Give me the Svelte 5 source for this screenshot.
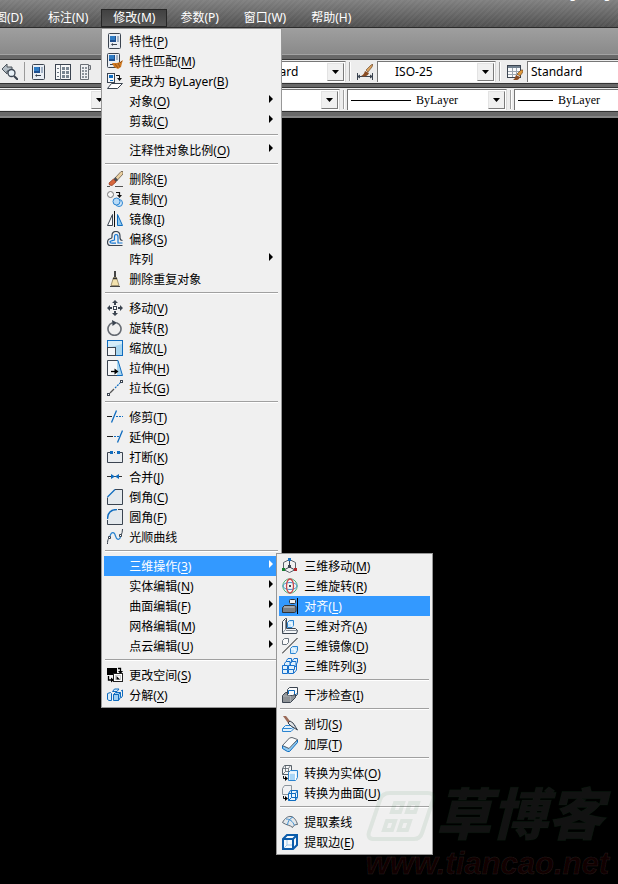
<script>
    // 16x16 图标
    const dark = '#3b4450';
    const blue = '#0f6cbf';

    const icons = {
        props: `<rect x="1.5" y=".5" width="12" height="15" rx="1" fill="#e9eef4" stroke="${dark}"/><path d="M3 3h6v6H3z" fill="#1d4f8f"/><path d="M3 3h5v4H3z" fill="#2f7cc4"/><path d="M10 3h2v6h-2z" fill="#a3b3c6"/><path d="M5 11.500h5" stroke="${dark}"/><path d="M4 11.500l2-1.500v3z" fill="${dark}"/>`,
        match: `<rect x=".5" y=".5" width="12" height="14" rx="1" fill="#e9eef4" stroke="${dark}"/><path d="M2 2h6v6H2z" fill="#1d4f8f"/><path d="M2 2h5v4H2z" fill="#2f7cc4"/><path d="M9 2h2v5H9z" fill="#a3b3c6"/><path d="M3 11.500h3" stroke="${dark}"/><path d="M16 7l-3 2-3 1H5l2 4 4 2 3-2 1-4z" fill="#d07a22"/><path d="M8 11l3 4M11 10l2 4M15 8l-2 2" stroke="#7c4212" stroke-width=".7" fill="none"/>`,
        bylayer: `<rect x=".5" y=".5" width="7" height="9" fill="#f4f8fc" stroke="${dark}"/><path d="M2 2h4v3H2z" fill="${blue}"/><path d="M3 7.500h3" stroke="${blue}"/><path d="M9 2.500h3.500v3" fill="none" stroke="#111"/><path d="M10 5h5l-2.500 3z" fill="#111"/><path d="M4.500 10.500h11l-5 5H.5z" fill="#fff" stroke="${dark}"/>`,
        erase: `<path d="M0 15.500h3M8 15.500h8" stroke="#555"/><path d="M8 7l6-6.500h2V3l-6 6.500z" fill="#e9cfa0" stroke="#6a5a48" stroke-width=".8"/><path d="M6.500 8L8.500 6l2.500 3-2 2z" fill="#4a4d52"/><path d="M6.500 8L9 11l-4 3.500-2.500-.5-.500-2z" fill="#d8683e" stroke="#8a2e12" stroke-width=".7"/>`,
        copy: `<circle cx="3.500" cy="3.500" r="3" fill="#f7f7f7" stroke="#777"/><path d="M9 1.500h3.500v3" fill="none" stroke="#111" stroke-width="1.200"/><path d="M10 4h5l-2.500 3z" fill="#111"/><circle cx="12" cy="12" r="3.500" fill="#d3e8fa" stroke="#2b84d0"/><circle cx="9.500" cy="10.500" r="3.500" fill="#b9dbf7" stroke="#2b84d0"/>`,
        mirror: `<path d="M5.500 3.500v11h-5z" fill="#fafafa" stroke="${dark}"/><path d="M7.500 0v16" stroke="#111"/><path d="M10.500 3.500v11h5z" fill="#8fc8ee" stroke="${blue}"/>`,
        offset: `<path d="M15.500 9.500c-2 0-2.500-1-2.500-3V5c0-3-1.500-4.500-4-4.500S5 2 5 4.500V6c0 1-.5 1.500-1.500 1.500C1.500 8 .5 9 .5 11s1 3.500 3 3.500h12" fill="none" stroke="${dark}" stroke-width="1.200"/><path d="M15.500 12H11V6c0-2-.7-2.500-2-2.500S7.500 4.500 7.500 6v3c-2 .5-4.500.5-4.500 2 0 1 1 1.200 2 1.200h4" fill="none" stroke="#1477d4" stroke-width="1.200"/>`,
        overkill: `<path d="M8 0v6" stroke="#444" stroke-width="2"/><path d="M6.500 6.500h3l2.500 8H4z" fill="#f3e2ae" stroke="#8a7c58" stroke-width=".8"/><path d="M6 7.500h4" stroke="#333" stroke-width="1.500"/><path d="M3 15.500h10" stroke="#444"/>`,
        move: `<rect x="6.500" y="6.500" width="3" height="3" fill="#fff" stroke="${dark}"/><path d="M8 0l3 3H9v2H7V3H5zM8 16l3-3H9v-2H7v2H5zM0 8l3-3v2h2v2H3v2zM16 8l-3-3v2h-2v2h2v2z" fill="${dark}"/>`,
        rotate: `<path d="M9.500 2.700a6.500 6.500 0 1 1-4 0" fill="none" stroke="#666b72" stroke-width="1.600"/><path d="M5 0l5 2.700L5.500 6z" fill="${dark}"/>`,
        scale: `<rect x=".5" y=".5" width="15" height="15" fill="#a8d5ef" stroke="${blue}"/><path d="M1 1h14v3L4 7H1z" fill="#d4ecf8"/><rect x=".5" y="7.500" width="8" height="8" fill="#f4f6f8" stroke="${dark}"/>`,
        stretch: `<path d="M9 .5h2l4.500 15H9z" fill="#a8d5ef" stroke="${blue}"/><path d="M10 .5H.5v15H10" fill="#f6f7f8" stroke="${dark}"/><path d="M4 11.500h4" stroke="#000" stroke-width="1.300"/><path d="M7.500 8.500l4 3-4 3z"/>`,
        lengthen: `<path d="M3 13l4-4" stroke="#555" stroke-width="1.200"/><path d="M8 8l5-5" stroke="${blue}" stroke-width="1.200" stroke-dasharray="2 1"/><rect x=".5" y="13.500" width="2" height="2" fill="#fff" stroke="${dark}"/><rect x="13.500" y=".5" width="2" height="2" fill="#fff" stroke="${dark}"/>`,
        trim: `<path d="M0 7.500h5" stroke="#222"/><path d="M4.500 13.500l5-12" stroke="${blue}" stroke-width="1.300"/><path d="M9 7.500h7" stroke="${blue}" stroke-dasharray="2 1"/>`,
        extend: `<path d="M0 7.500h6" stroke="#222"/><path d="M7 7.500h5" stroke="${blue}" stroke-dasharray="2 1"/><path d="M10.500 13.500l5-12" stroke="${blue}" stroke-width="1.300"/>`,
        break: `<path d="M1 4h14v10H1z" fill="#e9ecef"/><path d="M3 3.500H.5v10h15v-10H13M7 3.500h1" fill="none" stroke="${dark}"/><path d="M3 2h3v3H3zM10 2h3v3h-3z" fill="${blue}"/>`,
        join: `<path d="M0 7.500h15" stroke="#333"/><path d="M4 5l4 2.500L4 10zM12 5L8 7.500l4 2.500z" fill="${blue}"/>`,
        chamfer: `<path d="M7 .5h8.500v15H.5V8z" fill="#e4e9ed"/><path d="M8 .5h7.500v15H.5V8.500" fill="none" stroke="${dark}"/><path d="M.5 8L8 .5" stroke="${blue}" stroke-width="1.300"/>`,
        fillet: `<path d="M10 .5h5.500v15H.5V10C1 4 4 1 10 .5z" fill="#e4e9ed"/><path d="M11 .5h4.500v15H.5V11" fill="none" stroke="${dark}"/><path d="M.5 10C.5 4 4 .5 10 .5" fill="none" stroke="${blue}" stroke-width="1.300"/>`,
        blend: `<path d="M.5 15c0-2 0-4 1.500-6M14 6.500c1-2 1.500-4 1.500-6.500" fill="none" stroke="${dark}"/><path d="M3 7c1.500-5 4.500-4 5.500 0s4 4.500 5 1" fill="none" stroke="#2b84d0" stroke-width="1.200"/><path d="M1.500 7.500h2v2h-2zM12.500 5.500h2v2h-2z" fill="#fff" stroke="${dark}"/>`,
        space: `<path d="M0 1h10v7H0z"/><path d="M11 1.500h2.500V5M1.500 9v4H4" fill="none" stroke="#000" stroke-width="1.300"/><path d="M11 4h5l-2.500 3zM4 10.500l3 2.500-3 2.500z"/><rect x="6.500" y="6.500" width="9" height="8" fill="#fff" stroke="#222"/><path d="M8.500 8.500h5v4h-5z" fill="none" stroke="#999" stroke-dasharray="1 1"/><path d="M9.500 9l3.500 3.500h-3.500z"/>`,
        explode: `<path d="M6.500 7.500l2-2h5v5l-2 3h-5z" fill="#9fd0f2" stroke="${blue}"/><path d="M6.500 7.500h5v6M11.500 7.500l2-2" fill="none" stroke="${blue}"/><path d="M5.500 4.500l2-2.500H12l-2 2.500z" fill="#d7ecfa" stroke="${blue}"/><path d="M.5 6.500l3-1 1 1v7H2l-1.500-1z" fill="#d7ecfa" stroke="${blue}"/><path d="M14 4l1.500-1v6L14 11" fill="none" stroke="${blue}"/>`,
        move3d: `<path d="M7.500 1.500l6 3v7l-6 3-6-3v-7z" fill="none" stroke="#59626a"/><path d="M7.500 2v7M7.500 9L2 12M7.500 9l5.500 3" stroke="${dark}" fill="none"/><path d="M6 0h3v3H6z" fill="#1b74c4"/><path d="M0 10h3v3H0z" fill="#16802f"/><path d="M12 10h3v3h-3z" fill="#b3262a"/><path d="M6 7h3v3H6z" fill="${dark}"/>`,
        rotate3d: `<circle cx="8" cy="8" r="7.200" fill="#f3f6f4" stroke="#4fae78"/><ellipse cx="8" cy="8" rx="7" ry="3.500" fill="none" stroke="#4a94cf"/><ellipse cx="8" cy="8" rx="3.500" ry="7" fill="none" stroke="#c9474a" stroke-width="1.300"/><path d="M7 7h2v2H7z" fill="${dark}"/>`,
        align: `<path d="M15.500 0v16" stroke="#000"/><path d="M.5 9.500l2-2h10l1.500 1v5l-1.500 1H.5z" fill="#7b7f84" stroke="#303338"/><path d="M2 9h10.500" stroke="#c5cacf"/><rect x="7.500" y="1.500" width="6" height="4" rx="1" fill="#f0f0f0" stroke="#303338"/>`,
        align3d: `<path d="M.5 3.500l3-3h1v10h9l2 2-1 3H.5z" fill="#f4f6f8" stroke="${dark}"/><path d="M3.500 2v9.500l-3 3.500M4 12.500h11" fill="none" stroke="#68727c" stroke-width=".8"/><path d="M5.500 4.500l2-2h4v5l-1.500 2H5.500z" fill="#c9e6fb" stroke="#2b84d0"/><path d="M6 5h4v4" fill="none" stroke="#fff"/>`,
        mirror3d: `<path d="M.5 2.500l2-2h4v4l-2 2h-4z" fill="#fafafa" stroke="#68727c"/><path d="M0 15.500L15.500 0" stroke="#111"/><path d="M8.500 10.500l2-2h5v4l-2 3h-5z" fill="#c9e6fb" stroke="#2b84d0"/><path d="M9 11h4v4" fill="none" stroke="#fff"/>`,
        array3d: `<g fill="#dff0fc" stroke="#1670cc"><path d="M4.500 2.500l1.500-2h3.500v4h-5zM10.500 2.500l1.500-2h3.500v4l-1.500 2h-3.500z"/><path d="M2.500 5.500l1.500-2h4v5H2.500zM8.500 5.500l1.500-2h4v5H8.500z"/><path d="M.5 7.500h5v4h-5zM6.500 7.500h6v4h-6z"/><path d="M.5 11.500h5v4h-5zM6.500 11.500h5v4h-5z"/><path d="M12 15l2.500-3V6" fill="none"/></g>`,
        interfere: `<path d="M5.500 2.500l2-2h8v7l-4 4h-6z" fill="#fafbfc" stroke="${dark}"/><path d="M6.500 7V3.500h6V9l3-3" fill="none" stroke="${blue}"/><path d="M.5 8.500l3-3h2v3h5l3-1v3l-5 5H.5z" fill="#8e9296" stroke="${dark}"/><path d="M1 9h7.500v6" fill="none" stroke="#a9adb1"/>`,
        slice: `<path d="M.5 12.500l3-3H13l-1 3-3 3H.5z" fill="#dff0fc" stroke="#2b84d0"/><path d="M.5 12.500h9l3-2.500" fill="none" stroke="#2b84d0"/><path d="M1 0h3l4 5-2 2z" fill="#9a6a58"/><path d="M6 7l2-2 3 2 4.500 7L9 10z" fill="#dfe3e6" stroke="${dark}"/>`,
        thicken: `<path d="M.5 9.500v3l5 3h2l8-9V4l-9 8z" fill="#8fcaf2" stroke="${blue}"/><path d="M.5 9.500L7.500 2l2.500-.5 5.500 2-8.500 9z" fill="#fafafa" stroke="#5d666f"/>`,
        tosolid: `<path d="M.5 3.500l2-3h7v6l-2 3h-7z" fill="#f6f7f8" stroke="#59626a"/><path d="M.5 3.500h6v6M6.500 3.500l2-3M3.500 1v5.500h5M3.500 6.500l-3 3" fill="none" stroke="#59626a" stroke-width=".8"/><path d="M1.500 11v2.500H4" fill="none" stroke="#111"/><path d="M3 11l3 2.500L3 16z"/><path d="M6.500 7.500l2-2h7v7l-2 3h-7z" fill="#dff0fc" stroke="#2b84d0"/><path d="M8 8.500h5.500V15H8z" fill="#a9d6f7"/><path d="M7 8h6.500v7" fill="none" stroke="#fff"/>`,
        tosurf: `<path d="M.5 3.500l2-3h7v6l-2 3h-7z" fill="#f0f1f3" stroke="#8b949c"/><path d="M1.500 11v2.500H4" fill="none" stroke="#111"/><path d="M3 11l3 2.500L3 16z"/><path d="M6.500 8.500l2-3h7v7l-2 3h-7z" fill="#e9f4fd" stroke="${blue}"/><path d="M6.500 8.500h7v7M13.500 8.500l2-3M9.500 6v6.500h6M9.500 12.500l-3 3" fill="none" stroke="${blue}"/>`,
        isoline: `<path d="M.5 8.500C3 4 6 2 9 2.500c3 .5 5.500 4 6.500 8-2 0-4 .5-5 3-2-2.500-6-2-10-5z" fill="#e3e7ea" stroke="#5d6873"/><path d="M4 5c4 0 6.500 2 8.500 6.500M5.500 11C6 7 7.500 4.500 11 3" fill="none" stroke="#3f8fd0"/>`,
        edges: `<path d="M1 5l4-4h10v10l-4 4H1z" fill="#f4f9fd" stroke="#0b5cab" stroke-width="2"/><path d="M1 5h10v10M11 5l4-4" fill="none" stroke="#0b5cab" stroke-width="2"/><path d="M5 6v5h5M5 11l-3 3" fill="none" stroke="#9cc8ea"/>`,
        zoomPrev: `<path d="M0 5l5-5v3h5v4H5v3z" fill="#b3bdc5" stroke="#4c555d"/><circle cx="9.500" cy="9" r="3.500" fill="#e8f1f7" stroke="${dark}" stroke-width="1.300"/><path d="M12 12l4 4" stroke="${dark}" stroke-width="2"/>`,
        center: `<rect x=".5" y=".5" width="15" height="15" fill="#f7f8f9" stroke="${dark}"/><path d="M5.500 1v15M2 4.500h2M2 8.500h2M2 12.500h2" stroke="#6c7782"/><path d="M7 3h3v3H7zM11 3h3v3h-3zM7 7h3v3H7zM11 7h3v3h-3zM7 11h3v3H7zM11 11h3v3h-3z" fill="#7a8793"/>`,
        palettes: `<path d="M1.500.5h8v15h-8z" fill="#f0f1f3" stroke="#6a6f75"/><path d="M9.500 1.500h2v4h-2z" fill="#d0d3d6" stroke="#6a6f75"/><path d="M3 3h2v2H3zM6 3h2v2H6zM3 6h2v2H3zM6 6h2v2H6zM3 9h2v2H3zM6 9h2v2H6zM3 12h2v2H3zM6 12h2v2H6z" fill="#8d949b"/>`,
        dimStyle: `<path d="M.5 9v7M15.500 9v7M1 12.500h14" stroke="${dark}"/><path d="M3 10.500l-3 2 3 2zM13 10.500l3 2-3 2z" fill="${dark}"/><path d="M4 12c2-1 3-2 4-5l4 2c-1 3-4 4-8 3z" fill="#8a4d24"/><path d="M9 6l5-5 2-1-1 3-4 5z" fill="#d9a25f" stroke="#5f3a1c" stroke-width=".6"/>`,
        tableStyle: `<rect x=".5" y="1.500" width="13" height="12" fill="#fafbfc" stroke="${dark}"/><path d="M1 2h12v2H1z" fill="#71808e"/><path d="M1 7.500h12M1 10.500h12M5.500 4v9M9.500 4v9" stroke="#9aa5af"/><path d="M6 16c2-1 2-3 3-5l4 2c-1 3-4 4-7 3z" fill="#8a4d24"/><path d="M10 10l4-4h2v2l-3 4z" fill="#e09a3c" stroke="#5f3a1c" stroke-width=".6"/>`
    };

    const topMenus = [
        { text: '绘图', key: 'D' },
        { text: '标注', key: 'N' },
        { text: '修改', key: 'M' },
        { text: '参数', key: 'P' },
        { text: '窗口', key: 'W' },
        { text: '帮助', key: 'H' }
    ];

    // 三维操作子菜单
    const ops3d = [
        [
            { text: '三维移动', key: 'M', icon: 'move3d' },
            { text: '三维旋转', key: 'R', icon: 'rotate3d' },
            { text: '对齐', key: 'L', icon: 'align' },
            { text: '三维对齐', key: 'A', icon: 'align3d' },
            { text: '三维镜像', key: 'D', icon: 'mirror3d' },
            { text: '三维阵列', key: '3', icon: 'array3d' }
        ],
        [{ text: '干涉检查', key: 'I', icon: 'interfere' }],
        [
            { text: '剖切', key: 'S', icon: 'slice' },
            { text: '加厚', key: 'T', icon: 'thicken' }
        ],
        [
            { text: '转换为实体', key: 'O', icon: 'tosolid' },
            { text: '转换为曲面', key: 'U', icon: 'tosurf' }
        ],
        [
            { text: '提取素线', icon: 'isoline' },
            { text: '提取边', key: 'E', icon: 'edges' }
        ]
    ];

    // 修改菜单
    const modify = [
        [
            { text: '特性', key: 'P', icon: 'props' },
            { text: '特性匹配', key: 'M', icon: 'match' },
            { text: '更改为 ByLayer', key: 'B', icon: 'bylayer' },
            { text: '对象', key: 'O', more: true },
            { text: '剪裁', key: 'C', more: true }
        ],
        [{ text: '注释性对象比例', key: 'O', more: true }],
        [
            { text: '删除', key: 'E', icon: 'erase' },
            { text: '复制', key: 'Y', icon: 'copy' },
            { text: '镜像', key: 'I', icon: 'mirror' },
            { text: '偏移', key: 'S', icon: 'offset' },
            { text: '阵列', more: true },
            { text: '删除重复对象', icon: 'overkill' }
        ],
        [
            { text: '移动', key: 'V', icon: 'move' },
            { text: '旋转', key: 'R', icon: 'rotate' },
            { text: '缩放', key: 'L', icon: 'scale' },
            { text: '拉伸', key: 'H', icon: 'stretch' },
            { text: '拉长', key: 'G', icon: 'lengthen' }
        ],
        [
            { text: '修剪', key: 'T', icon: 'trim' },
            { text: '延伸', key: 'D', icon: 'extend' },
            { text: '打断', key: 'K', icon: 'break' },
            { text: '合并', key: 'J', icon: 'join' },
            { text: '倒角', key: 'C', icon: 'chamfer' },
            { text: '圆角', key: 'F', icon: 'fillet' },
            { text: '光顺曲线', icon: 'blend' }
        ],
        [
            { text: '三维操作', key: '3', more: true, children: ops3d },
            { text: '实体编辑', key: 'N', more: true },
            { text: '曲面编辑', key: 'F', more: true },
            { text: '网格编辑', key: 'M', more: true },
            { text: '点云编辑', key: 'U', more: true }
        ],
        [
            { text: '更改空间', key: 'S', icon: 'space' },
            { text: '分解', key: 'X', icon: 'explode' }
        ]
    ];

    let openMenu = '修改';
    let activeItem = '三维操作';
    let activeChild = '对齐';

    function toggleMenu(name) {
        openMenu = openMenu === name ? '' : name;
    }

    function hoverItem(item, level) {
        if (level === 0) {
            activeItem = item.text;
        } else {
            activeChild = item.text;
        }
    }
</script>

{#snippet icon(name)}
    <svg class="icon" viewBox="0 0 16 16" aria-hidden="true">{@html icons[name]}</svg>
{/snippet}

{#snippet combo(label, value, size, line)}
    <div class="combo {size}">
        {#if line}<span class="line {line}"></span>{/if}
        <select aria-label={label}><option>{value}</option></select>
        <span class="drop"><svg viewBox="0 0 7 4"><path d="M0 0h7L3.500 4z" /></svg></span>
    </div>
{/snippet}

{#snippet menu(groups, active, level)}
    <div class="menu level{level}" role="menu">
        {#each groups as group}
            <ul>
                {#each group as item}
                    <li>
                        <button
                            class="item"
                            class:active={item.text === active}
                            role="menuitem"
                            on:mouseenter={() => hoverItem(item, level)}
                        >
                            <span class="slot">
                                {#if item.icon}{@render icon(item.icon)}{/if}
                            </span>
                            <span class="text">{item.text}{#if item.key}(<u>{item.key}</u>){/if}</span>
                            {#if item.more}
                                <svg class="more" viewBox="0 0 4 8"><path d="M0 0l4 4-4 4z" /></svg>
                            {/if}
                        </button>
                        {#if item.children && item.text === active}
                            {@render menu(item.children, activeChild, level + 1)}
                        {/if}
                    </li>
                {/each}
            </ul>
        {/each}
    </div>
{/snippet}

<div class="app">
    <header>
        <div class="title"><span>Drawing1.dwg</span></div>
        <nav>
            {#each topMenus as top}
                <div class="top">
                    <button class:open={openMenu === top.text} on:click={() => toggleMenu(top.text)}>
                        {top.text}({top.key})
                    </button>
                    {#if openMenu === top.text && top.text === '修改'}
                        {@render menu(modify, activeItem, 0)}
                    {/if}
                </div>
            {/each}
        </nav>
    </header>

    <div class="ribbon"></div>

    <div class="dock">
        <div class="toolbar">
            <div class="tools">
                <button class="tool" aria-label="缩放上一个">{@render icon('zoomPrev')}</button>
                <span class="divider"></span>
                <button class="tool" aria-label="特性">{@render icon('props')}</button>
                <button class="tool" aria-label="设计中心">{@render icon('center')}</button>
                <button class="tool" aria-label="工具选项板">{@render icon('palettes')}</button>
                <button class="tool" aria-label="图纸集">{@render icon('tableStyle')}</button>
            </div>
            <span class="grip"></span>
            <button class="tool" aria-label="文字样式">{@render icon('dimStyle')}</button>
            {@render combo('文字样式', 'Standard', 'text-style')}
            <span class="grip"></span>
            <button class="tool" aria-label="标注样式">{@render icon('dimStyle')}</button>
            {@render combo('标注样式', 'ISO-25', 'dim-style')}
            <span class="grip"></span>
            <button class="tool" aria-label="表格样式">{@render icon('tableStyle')}</button>
            {@render combo('表格样式', 'Standard', 'wide')}
        </div>
        <div class="toolbar">
            {@render combo('图层', '', 'layer')}
            <span class="grip"></span>
            {@render combo('颜色', '', 'wide')}
            <span class="grip"></span>
            {@render combo('线型', 'ByLayer', 'linetype', 'long')}
            <span class="grip"></span>
            {@render combo('线宽', 'ByLayer', 'linetype', 'short')}
        </div>
    </div>

    <main></main>

    <!-- 水印 -->
    <div class="watermark">
        <div class="brand">
            <svg viewBox="0 0 70 52">
                <path d="M24 3h38q7 0 5 7L56 43q-2 6-8 6H8q-7 0-5-7L14 10q2-7 10-7z" />
                <path d="M29 13h8l-3 9h-8zM44 13h8l-3 9h-8zM21 31h8l-3 9h-8zM36 31h8l-3 9h-8z" />
            </svg>
            <span>草博客</span>
        </div>
        <div class="site">www.tiancao.net</div>
    </div>
</div>

<style>
    :global(body) {
        background: #000;
    }

    .app {
        position: relative;
        display: flex;
        flex-direction: column;
        min-height: 100vh;
        overflow: hidden;
        font-family: "Noto Sans", "Noto Sans CJK SC", sans-serif;
        font-size: 12px;
        line-height: 16px;
        color: #000;
    }

    button,
    select {
        font: inherit;
        color: inherit;
        border: none;
        background: none;
        padding: 0;
        margin: 0;
    }

    header {
        background:
            repeating-linear-gradient(135deg, rgba(255, 255, 255, 0.04) 0 2px, transparent 2px 4px),
            linear-gradient(#808080, #505050);
        border-bottom: 1px solid #2c2c2c;
        color: #fff;
    }

    .title {
        display: flex;
        align-items: flex-end;
        justify-content: flex-end;
        height: 2px;
        padding-right: 7px;
        margin-bottom: 7px;
        overflow: hidden;
    }

    nav {
        display: flex;
        gap: 1px;
        margin-left: -29px;
    }

    .top {
        position: relative;
    }

    .top > button {
        height: 18px;
        padding: 0 11px;
        border: 1px solid transparent;
        white-space: nowrap;
        line-height: 16px;
    }

    .top > button.open {
        border-color: #262626;
        background: linear-gradient(#414141, #565656);
    }

    /* 菜单 */
    .menu {
        position: absolute;
        z-index: 5;
        box-sizing: border-box;
        padding: 2px;
        background: #f0f0f0;
        border: 1px solid #979797;
        color: #000;
    }

    .level0 {
        top: 19px;
        left: 0;
        min-width: 181px;
    }

    .level1 {
        top: -3px;
        left: 172px;
        min-width: 157px;
    }

    ul {
        list-style: none;
        margin: 0;
        padding: 0;
    }

    ul + ul::before {
        content: "";
        display: block;
        height: 1px;
        margin: 3px 1px 4px;
        background: #a0a0a0;
        border-bottom: 1px solid #fff;
    }

    li {
        position: relative;
    }

    .item {
        display: flex;
        align-items: center;
        width: 100%;
        height: 20px;
        padding: 0 6px 0 3px;
        text-align: left;
        white-space: nowrap;
    }

    .item.active {
        background: #3399ff;
        color: #fff;
    }

    .slot {
        flex: 0 0 22px;
        height: 16px;
    }

    .text {
        flex: 1;
        padding-top: 2px;
    }

    u {
        text-underline-offset: 2px;
    }

    .icon {
        display: block;
        width: 16px;
        height: 16px;
    }

    .more {
        width: 4px;
        height: 8px;
        margin-bottom: 4px;
        fill: currentColor;
    }

    /* 工具栏 */
    .ribbon {
        height: 26px;
        background: linear-gradient(#9f9f9f, #8a8a8a);
        border-bottom: 1px solid #a3a3a3;
    }

    .dock {
        display: flex;
        flex-direction: column;
        gap: 3px;
        padding: 4px 0;
        background: #696969;
        border-bottom: 2px solid #858585;
    }

    .toolbar {
        display: flex;
        align-items: center;
        height: 23px;
        background: #ededed;
        border: solid #333;
        border-width: 1px 0;
        overflow: hidden;
    }

    .tools {
        display: flex;
        align-items: center;
        flex: 0 0 214px;
        margin-left: -2px;
    }

    .tool {
        flex: 0 0 24px;
        height: 22px;
        padding: 0 4px;
    }

    .divider {
        flex: 0 0 1px;
        height: 19px;
        margin: 0 2px;
        background: #9a9a9a;
    }

    .grip {
        flex: 0 0 1px;
        height: 19px;
        margin: 0 2px 0 3px;
        background: #a0a0a0;
        border-right: 1px solid #fff;
    }

    .combo {
        display: flex;
        align-items: center;
        box-sizing: border-box;
        height: 21px;
        padding: 0 1px 0 3px;
        background: #fff;
        border: solid #777;
        border-width: 1px 0 0 1px;
        border-right: 1px solid #d8d8d8;
    }

    .combo select {
        appearance: none;
        flex: 1;
        min-width: 0;
        height: 18px;
        outline: none;
    }

    .text-style {
        flex: 0 0 103px;
    }

    .dim-style {
        flex: 0 0 119px;
        padding-left: 17px;
    }

    .wide {
        flex: 0 0 223px;
    }

    .layer {
        flex: 0 0 112px;
        margin-left: -2px;
    }

    .linetype {
        flex: 0 0 160px;
        font-family: "Liberation Serif", serif;
    }

    .line {
        height: 1px;
        background: #000;
        margin-right: 5px;
    }

    .long {
        flex: 0 0 60px;
    }

    .short {
        flex: 0 0 35px;
    }

    .drop {
        display: flex;
        align-items: center;
        justify-content: center;
        box-sizing: border-box;
        flex: 0 0 17px;
        height: 18px;
        background: #f0f0f0;
        border: 1px solid;
        border-color: #e3e3e3 #7a7a7a #7a7a7a #e3e3e3;
    }

    .drop svg {
        width: 7px;
        height: 4px;
    }

    main {
        flex: 1;
        background: #000;
    }

    /* 水印盖在菜单之上 */
    .watermark {
        position: absolute;
        right: 9px;
        bottom: 4px;
        z-index: 10;
        pointer-events: none;
        font-family: "Liberation Sans", "Noto Sans CJK SC", sans-serif;
        font-weight: 900;
        font-style: italic;
        white-space: nowrap;
    }

    .brand {
        display: flex;
        align-items: center;
    }

    .brand svg {
        width: 70px;
        height: 52px;
        fill: rgba(255, 255, 255, 0.02);
        stroke: rgba(0, 90, 30, 0.08);
        stroke-width: 4;
    }

    .brand span {
        font-size: 56px;
        line-height: 64px;
        color: rgba(255, 255, 255, 0.07);
        -webkit-text-stroke: 1px rgba(0, 90, 30, 0.1);
    }

    .site {
        font-family: "Liberation Sans", sans-serif;
        font-size: 31px;
        line-height: 32px;
        text-align: right;
        color: rgba(90, 0, 0, 0.2);
        -webkit-text-stroke: 1px rgba(255, 255, 255, 0.07);
    }
</style>
